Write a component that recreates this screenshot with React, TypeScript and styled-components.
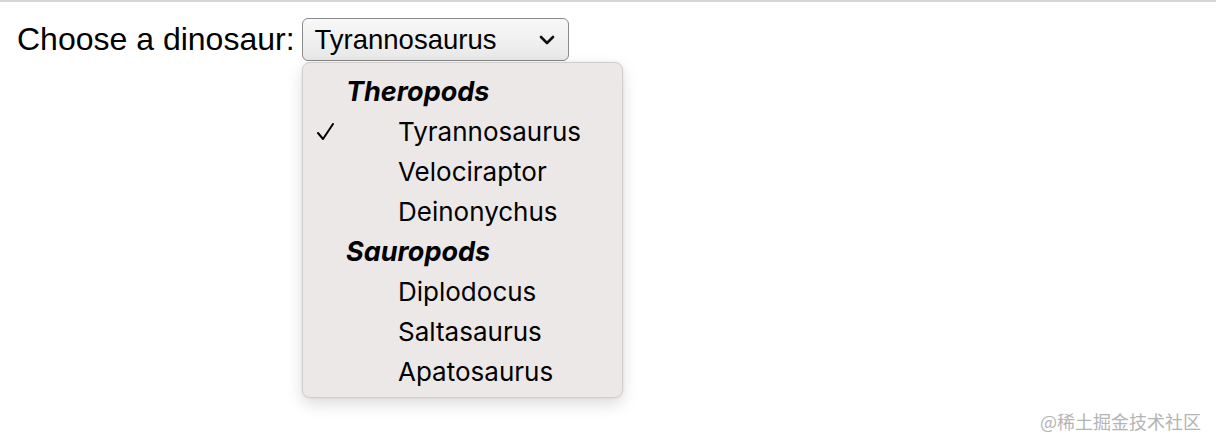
import React from "react";
import styled, { createGlobalStyle } from "styled-components";

const Global = createGlobalStyle`
  html, body { margin: 0; padding: 0; background: #ffffff; }
  body { width: 1216px; height: 448px; overflow: hidden; position: relative; }
`;

const TopRule = styled.div`
  height: 2px;
  background: #d6d6d6;
`;

const Field = styled.div`
  position: relative;
  display: flex;
  align-items: center;
  gap: 7px;
  padding: 16px 0 0 17px;
`;

const Label = styled.label`
  font-family: "Liberation Sans", Arial, sans-serif;
  font-size: 32px;
  color: #000;
`;

const SelectBox = styled.div`
  box-sizing: border-box;
  width: 267px;
  height: 43px;
  border: 1.5px solid #8a8a8a;
  border-radius: 6px;
  background: linear-gradient(#f8f8f8, #e8e8e8);
  display: flex;
  align-items: center;
  justify-content: space-between;
  padding: 0 13px 0 12px;
  font-family: "Liberation Sans", Arial, sans-serif;
  font-size: 27.5px;
  color: #000;
`;

const Menu = styled.div`
  position: absolute;
  left: 302px;
  top: 62px;
  box-sizing: border-box;
  width: 321px;
  height: 336px;
  padding: 8px 0 6px;
  background: #ede8e8;
  border: 1px solid #d2cece;
  border-radius: 8px;
  box-shadow: 0 6px 16px rgba(0, 0, 0, 0.14), 0 0 3px rgba(0, 0, 0, 0.08);
  font-family: Inter, "Noto Sans", sans-serif;
  color: #000;
`;

const Row = styled.div<{ $group?: boolean }>`
  height: 40px;
  display: flex;
  align-items: center;
  padding-left: ${(p) => (p.$group ? "43px" : "95px")};
  font-size: ${(p) => (p.$group ? "27px" : "26px")};
  font-weight: ${(p) => (p.$group ? 700 : 400)};
  font-style: ${(p) => (p.$group ? "italic" : "normal")};
  position: relative;
`;

const Check = styled.svg`
  position: absolute;
  left: 13px;
  top: 12px;
`;

const Watermark = styled.div`
  position: absolute;
  right: 15px;
  bottom: 14px;
  font-family: "Noto Sans CJK SC", "Noto Sans", sans-serif;
  font-size: 18px;
  color: #b4b4b4;
`;

const groups = [
  { name: "Theropods", items: ["Tyrannosaurus", "Velociraptor", "Deinonychus"] },
  { name: "Sauropods", items: ["Diplodocus", "Saltasaurus", "Apatosaurus"] },
];

export default function App() {
  return (
    <>
      <Global />
      <TopRule />
      <Field>
        <Label>Choose a dinosaur:</Label>
        <SelectBox>
          <span>Tyrannosaurus</span>
          <svg width="16" height="10" viewBox="0 0 16 10">
            <path d="M2 2 L8 8 L14 2" fill="none" stroke="#111" strokeWidth="2.6" strokeLinecap="round" strokeLinejoin="round" />
          </svg>
        </SelectBox>
      </Field>
      <Menu>
        {groups.map((g) => (
          <React.Fragment key={g.name}>
            <Row $group>{g.name}</Row>
            {g.items.map((it) => (
              <Row key={it}>
                {it === "Tyrannosaurus" && (
                  <Check width="20" height="18" viewBox="0 0 20 18">
                    <path d="M2 10 L7 16 L17 1" fill="none" stroke="#000" strokeWidth="2" strokeLinecap="round" strokeLinejoin="round" />
                  </Check>
                )}
                {it}
              </Row>
            ))}
          </React.Fragment>
        ))}
      </Menu>
      <Watermark>@稀土掘金技术社区</Watermark>
    </>
  );
}
